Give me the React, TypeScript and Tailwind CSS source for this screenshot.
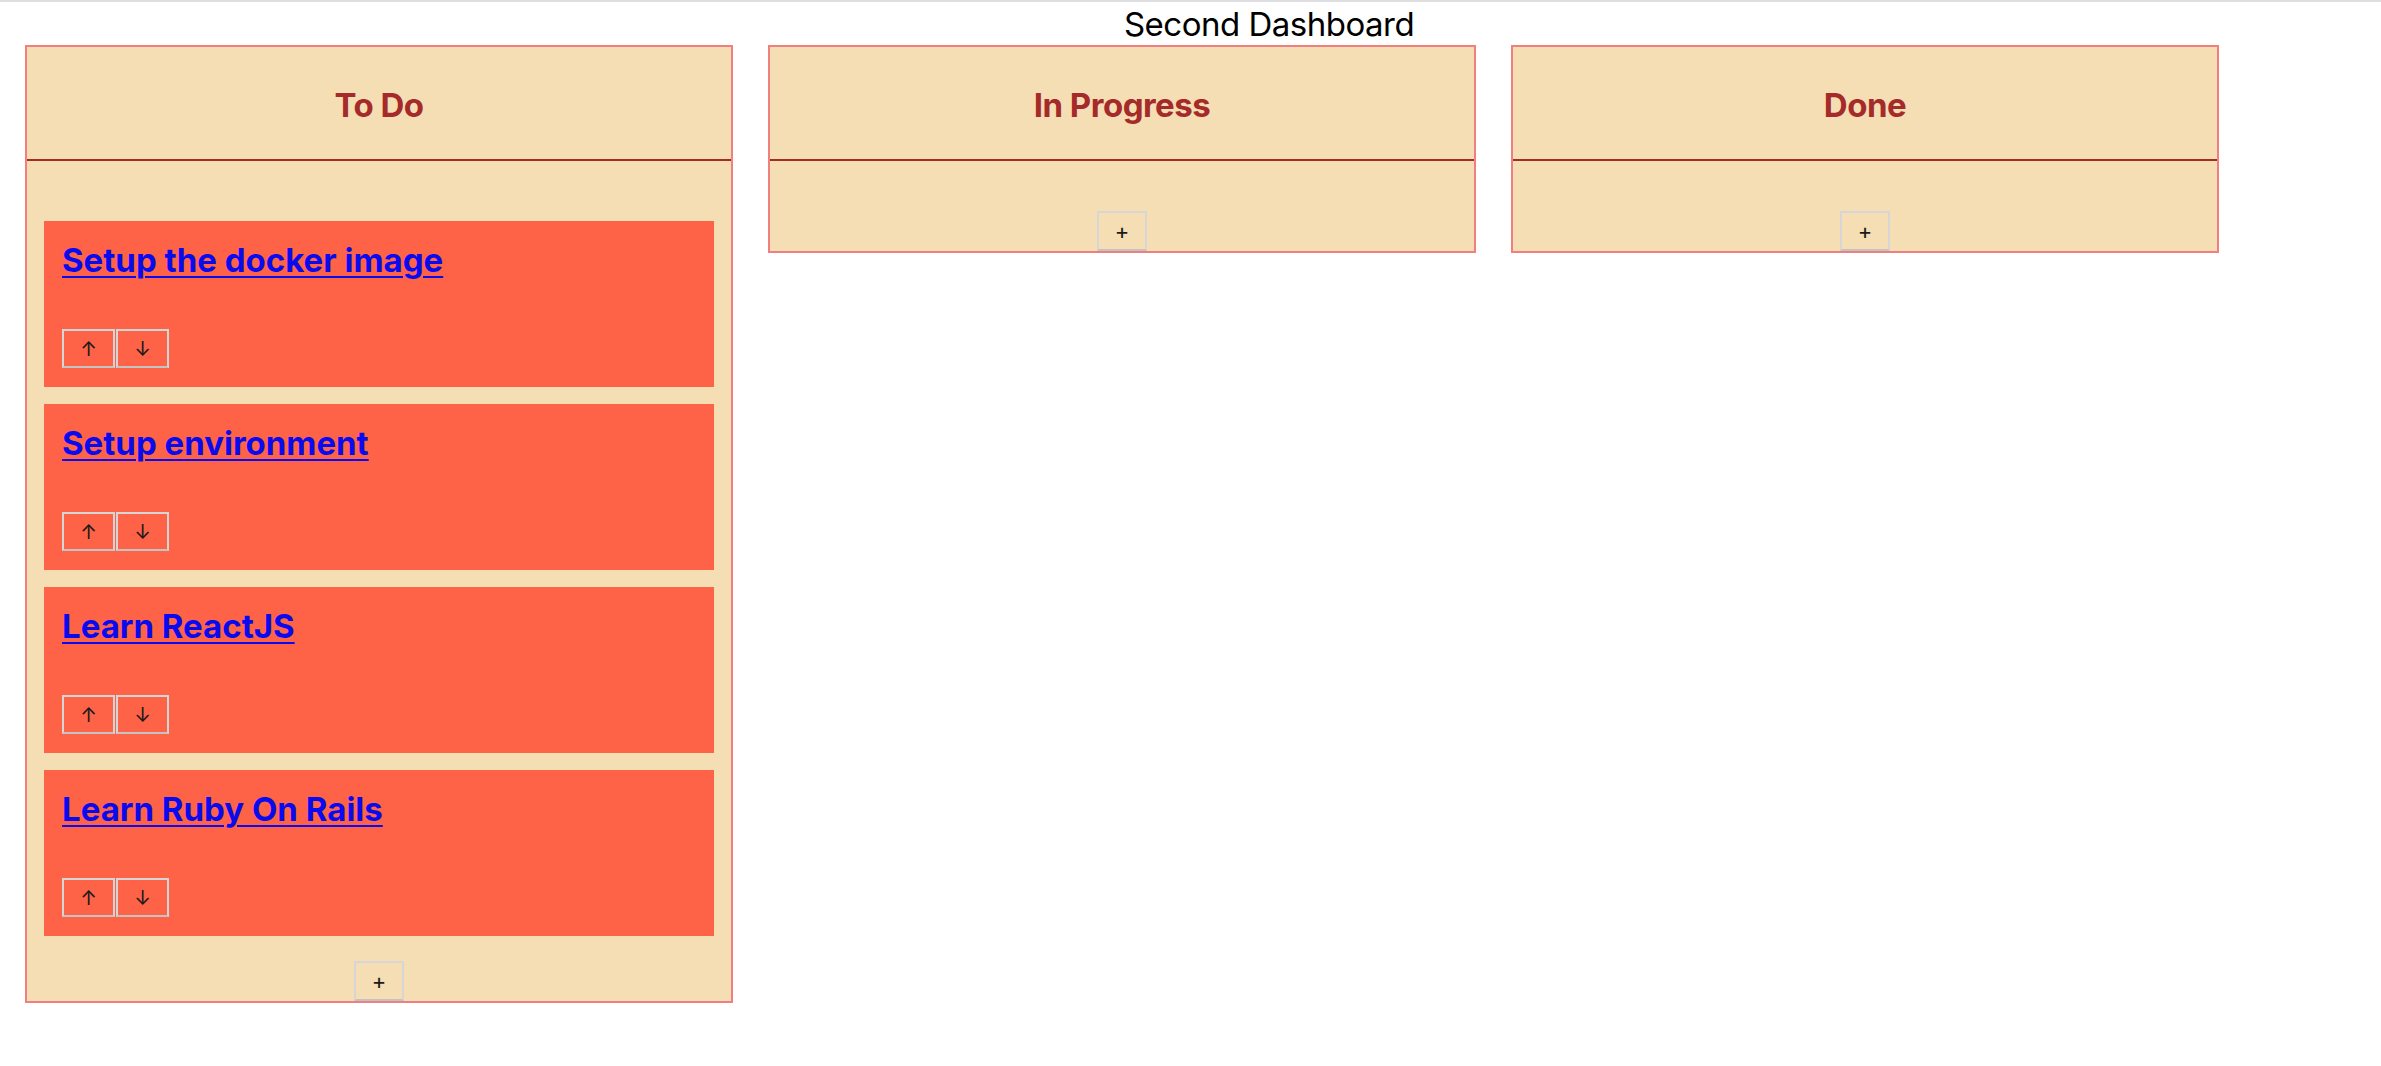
import React from 'react';

interface Task {
  id: number;
  title: string;
}

interface ColumnProps {
  title: string;
  tasks: Task[];
}

const todo: Task[] = [
  { id: 1, title: 'Setup the docker image' },
  { id: 2, title: 'Setup environment' },
  { id: 3, title: 'Learn ReactJS' },
  { id: 4, title: 'Learn Ruby On Rails' },
];

function TaskCard({ task }: { task: Task }) {
  return (
    <div className="h-[166px] bg-[#ff6347] mx-[17px] px-[18px] pt-[19px] pb-[19px] flex flex-col justify-between">
      <a
        href="#"
        className="text-[33px] leading-[40px] font-bold text-[#0a0aef] underline decoration-2 underline-offset-[4px] self-start"
      >
        {task.title}
      </a>
      <div className="flex gap-[1px]">
        <button className="w-[53px] h-[39px] border-2 border-[#d6d6d6] border-b-[#c3c3c3] text-[20px] text-[#1a1a1a] flex items-center justify-center">
          ↑
        </button>
        <button className="w-[53px] h-[39px] border-2 border-[#d6d6d6] border-b-[#c3c3c3] text-[20px] text-[#1a1a1a] flex items-center justify-center">
          ↓
        </button>
      </div>
    </div>
  );
}

function Column({ title, tasks }: ColumnProps) {
  return (
    <div className="w-[708px] border-2 border-[#f08080] bg-[#f5deb3] flex flex-col">
      <div className="h-[112px] pt-[5px] flex items-center justify-center text-[33px] font-bold text-[#a52a2a] tracking-[-0.5px]">
        {title}
      </div>
      <div className="h-[2px] bg-[#a52a2a]" />
      {tasks.length > 0 ? (
        <div className="pt-[60px] pb-[25px] flex flex-col gap-[17px]">
          {tasks.map((t) => (
            <TaskCard key={t.id} task={t} />
          ))}
        </div>
      ) : (
        <div className="h-[50px]" />
      )}
      <div className="flex justify-center">
        <button className="w-[50px] h-[40px] border-2 border-[#d6d6d6] border-b-[#c3c3c3] text-[22px] leading-none text-[#1a1a1a] flex items-center justify-center">
          +
        </button>
      </div>
    </div>
  );
}

export default function App() {
  return (
    <div className="min-h-screen bg-white font-['Inter',sans-serif]">
      <div className="h-[2px] bg-[#dedee3]" />
      <div className="h-[43px] pl-[157px] text-center text-[33px] leading-[45px] text-black tracking-[-0.5px]">
        Second Dashboard
      </div>
      <div className="flex items-start gap-[35px] pl-[25px]">
        <Column title="To Do" tasks={todo} />
        <Column title="In Progress" tasks={[]} />
        <Column title="Done" tasks={[]} />
      </div>
    </div>
  );
}
